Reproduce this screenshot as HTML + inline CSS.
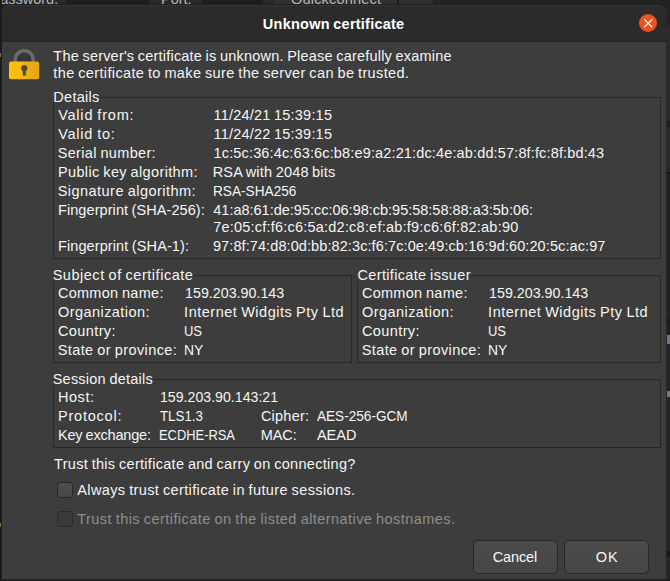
<!DOCTYPE html>
<html><head><meta charset="utf-8">
<style>
html,body{margin:0;padding:0;}
body{width:670px;height:581px;overflow:hidden;background:#232323;position:relative;font-family:"Liberation Sans",sans-serif;font-size:14.5px;line-height:17px;color:#f5f5f5;}
.abs{position:absolute;}
.bgt{position:absolute;white-space:nowrap;color:#b4b4b4;top:-9.5px;}
#dlg{left:2px;top:5px;width:664px;height:574px;background:#3d3d3d;border-radius:7px 7px 0 0;overflow:hidden;}
#tb{left:0;top:0;width:664px;height:36px;background:#2b2b2b;border-bottom:1px solid #262626;box-shadow:inset 0 1px 0 #373737;border-radius:7px 7px 0 0;}
#close{left:636.8px;top:8.6px;width:18.5px;height:18.5px;border-radius:50%;background:#e95420;}
.t{position:absolute;white-space:nowrap;transform-origin:0 0;word-spacing:-0.7px;}
.ln{position:absolute;background:#282828;}
.ti{font-weight:bold;color:#fff;}
.cb{position:absolute;width:16px;height:16px;box-sizing:border-box;border:1px solid #282828;border-radius:3px;background:linear-gradient(#4d4d4d,#474747);}
.btn{position:absolute;box-sizing:border-box;border:1px solid #282828;border-radius:5px;background:linear-gradient(#4b4b4b,#464646);}
.dim{color:#8e8e8e;}
</style></head><body>
<!-- background window fragments (top strip) -->
<div class="abs" style="left:0;top:0;width:66px;height:5px;background:#2a2a2a"></div>
<div class="abs" style="left:66px;top:0;width:83px;height:5px;background:#1d1d1d"></div>
<div class="abs" style="left:149px;top:0;width:53px;height:5px;background:#2a2a2a"></div>
<div class="abs" style="left:202px;top:0;width:61px;height:5px;background:#1d1d1d"></div>
<div class="abs" style="left:263px;top:0;width:11px;height:5px;background:#2a2a2a"></div>
<div class="abs" style="left:274px;top:0;width:123px;height:5px;background:#303030"></div>
<div class="abs" style="left:397px;top:0;width:2px;height:5px;background:#1c1c1c"></div>
<div class="abs" style="left:399px;top:0;width:34px;height:5px;background:#303030"></div>
<div class="abs" style="left:433px;top:0;width:1px;height:5px;background:#1c1c1c"></div>
<span class="bgt" style="left:-9.5px">Password:</span>
<span class="bgt" style="left:161px">Port:</span>
<span class="bgt" style="left:291px;letter-spacing:.2px">Quickconnect</span>
<!-- side / bottom strips -->
<div class="abs" style="left:0;top:0;width:2px;height:581px;background:#1c1c1c"></div>
<div class="abs" style="left:0;top:53px;width:1px;height:4px;background:#8f6a3a"></div>
<div class="abs" style="left:0;top:523px;width:1px;height:4px;background:#8f6a3a"></div>
<div class="abs" style="left:666px;top:0;width:4px;height:25px;background:#232323"></div>
<div class="abs" style="left:666px;top:25px;width:4px;height:556px;background:#2a2a2a"></div>
<div class="abs" style="left:666px;top:121px;width:4px;height:6px;background:#1e1e1e"></div>
<div class="abs" style="left:666px;top:172px;width:4px;height:2px;background:#141414"></div>
<div class="abs" style="left:666px;top:174px;width:4px;height:407px;background:#262626"></div>
<div class="abs" style="left:668px;top:174px;width:2px;height:160px;background:#1f1f1f"></div>
<div class="abs" style="left:666px;top:318px;width:4px;height:7px;background:#1d1d1d"></div>
<div class="abs" style="left:667px;top:335px;width:3px;height:9px;background:#6f7a86"></div>
<div class="abs" style="left:667px;top:391px;width:3px;height:6px;background:#777"></div>
<div class="abs" style="left:666px;top:551px;width:4px;height:6px;background:#1b1b1b"></div>
<div class="abs" style="left:0;top:579px;width:670px;height:2px;background:#202020"></div>
<div class="abs" style="left:2px;top:4px;width:664px;height:4px;background:#1f1f1f;border-radius:7px 7px 0 0"></div>
<div class="abs" id="dlg">
 <div class="abs" id="tb"></div>
 <div class="abs" id="close"><svg width="18.5" height="18.5" viewBox="0 0 18.5 18.5"><path d="M5.35 5.35 L13.15 13.15 M13.15 5.35 L5.35 13.15" stroke="#fff" stroke-width="1.3" fill="none"/></svg></div>
</div>
<!-- lock icon -->
<svg class="abs" style="left:6px;top:46px" width="36" height="36" viewBox="0 0 36 36">
 <defs><linearGradient id="lg1" x1="0" y1="0" x2="1" y2="0"><stop offset="0" stop-color="#fdc10e"/><stop offset=".45" stop-color="#f9b90f"/><stop offset=".55" stop-color="#eeb011"/><stop offset="1" stop-color="#e2a818"/></linearGradient></defs>
 <path d="M9.3 17 V13.6 A8.9 8.9 0 0 1 27.1 13.6 V17" stroke="#6b6b6b" stroke-width="3.5" fill="#373737"/>
 <rect x="3" y="15.5" width="30.2" height="17.8" rx="2" fill="url(#lg1)"/>
 <circle cx="18.3" cy="22.2" r="3.1" fill="#4a4a4c"/>
 <rect x="16.8" y="23" width="3" height="6.6" fill="#4a4a4c"/>
</svg>
<div class="ln" style="left:100px;top:97px;width:561px;height:1px"></div>
<div class="ln" style="left:53px;top:102px;width:1px;height:157px"></div>
<div class="ln" style="left:660px;top:97px;width:1px;height:162px"></div>
<div class="ln" style="left:53px;top:258px;width:608px;height:1px"></div>
<div class="ln" style="left:193px;top:275px;width:159px;height:1px"></div>
<div class="ln" style="left:53px;top:281px;width:1px;height:82px"></div>
<div class="ln" style="left:351px;top:275px;width:1px;height:88px"></div>
<div class="ln" style="left:53px;top:362px;width:299px;height:1px"></div>
<div class="ln" style="left:471px;top:275px;width:190px;height:1px"></div>
<div class="ln" style="left:357px;top:281px;width:1px;height:82px"></div>
<div class="ln" style="left:660px;top:275px;width:1px;height:88px"></div>
<div class="ln" style="left:357px;top:362px;width:304px;height:1px"></div>
<div class="ln" style="left:153px;top:379px;width:508px;height:1px"></div>
<div class="ln" style="left:53px;top:385px;width:1px;height:63px"></div>
<div class="ln" style="left:660px;top:379px;width:1px;height:69px"></div>
<div class="ln" style="left:53px;top:447px;width:608px;height:1px"></div>
<div class="cb" style="left:57px;top:482px"></div>
<div class="cb" style="left:57px;top:511px;background:#3a3a3a;border-color:#2a2a2a"></div>
<div class="btn" style="left:473px;top:540px;width:85px;height:34px"></div>
<div class="btn" style="left:564px;top:540px;width:85px;height:34px"></div>
<span class="t" id="l1" style="left:53.33px;top:48px;letter-spacing:0.198px">The server's certificate is unknown. Please carefully examine</span>
<span class="t" id="l2" style="left:53.33px;top:65px;letter-spacing:0.358px">the certificate to make sure the server can be trusted.</span>
<span class="t lg" id="gd" style="left:53.32px;top:89px;letter-spacing:0.269px">Details</span>
<span class="t" id="d1" style="left:58.13px;top:107px;letter-spacing:0.789px">Valid from:</span>
<span class="t" id="d2" style="left:58.13px;top:126px;letter-spacing:0.756px">Valid to:</span>
<span class="t" id="d3" style="left:57.71px;top:145px;letter-spacing:0.333px">Serial number:</span>
<span class="t" id="d4" style="left:58.01px;top:164px;letter-spacing:0.355px">Public key algorithm:</span>
<span class="t" id="d5" style="left:57.73px;top:183px;letter-spacing:0.460px">Signature algorithm:</span>
<span class="t" id="d6" style="left:58.01px;top:202px;letter-spacing:0.076px">Fingerprint (SHA-256):</span>
<span class="t" id="d7" style="left:57.97px;top:238px;letter-spacing:0.104px">Fingerprint (SHA-1):</span>
<span class="t" id="v1" style="left:213.57px;top:107px;letter-spacing:0.203px">11/24/21 15:39:15</span>
<span class="t" id="v2" style="left:213.57px;top:126px;letter-spacing:0.203px">11/24/22 15:39:15</span>
<span class="t" id="v3" style="left:213.59px;top:145px;letter-spacing:0.145px">1c:5c:36:4c:63:6c:b8:e9:a2:21:dc:4e:ab:dd:57:8f:fc:8f:bd:43</span>
<span class="t" id="v4" style="left:212.72px;top:164px;letter-spacing:0.168px">RSA with 2048 bits</span>
<span class="t" id="v5" style="left:212.83px;top:183px;transform:scaleX(0.9407)">RSA-SHA256</span>
<span class="t" id="v6" style="left:213.29px;top:202px;letter-spacing:-0.006px">41:a8:61:de:95:cc:06:98:cb:95:58:58:88:a3:5b:06:</span>
<span class="t" id="v7" style="left:213.13px;top:219px;letter-spacing:0.219px">7e:05:cf:f6:c6:5a:d2:c8:ef:ab:f9:c6:6f:82:ab:90</span>
<span class="t" id="v8" style="left:212.96px;top:238px;letter-spacing:0.094px">97:8f:74:d8:0d:bb:82:3c:f6:7c:0e:49:cb:16:9d:60:20:5c:ac:97</span>
<span class="t lg" id="gs" style="left:52.63px;top:267px;letter-spacing:0.528px">Subject of certificate</span>
<span class="t" id="s1" style="left:57.88px;top:285px;letter-spacing:0.284px">Common name:</span>
<span class="t" id="s2" style="left:57.92px;top:304px;letter-spacing:0.452px">Organization:</span>
<span class="t" id="s3" style="left:57.88px;top:323px;letter-spacing:0.412px">Country:</span>
<span class="t" id="s4" style="left:57.7px;top:342px;letter-spacing:0.408px">State or province:</span>
<span class="t" id="sv1" style="left:184.69px;top:285px;transform:scaleX(0.9847)">159.203.90.143</span>
<span class="t" id="sv2" style="left:184.11px;top:304px;letter-spacing:0.507px">Internet Widgits Pty Ltd</span>
<span class="t" id="sv3" style="left:184.28px;top:323px;transform:scaleX(0.8948)">US</span>
<span class="t" id="sv4" style="left:184.29px;top:342px;transform:scaleX(0.9559)">NY</span>
<span class="t lg" id="gi" style="left:357.53px;top:267px;letter-spacing:0.334px">Certificate issuer</span>
<span class="t" id="i1" style="left:361.88px;top:285px;letter-spacing:0.284px">Common name:</span>
<span class="t" id="i2" style="left:361.92px;top:304px;letter-spacing:0.452px">Organization:</span>
<span class="t" id="i3" style="left:361.88px;top:323px;letter-spacing:0.412px">Country:</span>
<span class="t" id="i4" style="left:361.7px;top:342px;letter-spacing:0.408px">State or province:</span>
<span class="t" id="iv1" style="left:488.69px;top:285px;transform:scaleX(0.9847)">159.203.90.143</span>
<span class="t" id="iv2" style="left:488.11px;top:304px;letter-spacing:0.507px">Internet Widgits Pty Ltd</span>
<span class="t" id="iv3" style="left:488.28px;top:323px;transform:scaleX(0.8948)">US</span>
<span class="t" id="iv4" style="left:488.29px;top:342px;transform:scaleX(0.9559)">NY</span>
<span class="t lg" id="ge" style="left:52.7px;top:371px;letter-spacing:0.233px">Session details</span>
<span class="t" id="e1" style="left:57.97px;top:389px;letter-spacing:0.543px">Host:</span>
<span class="t" id="e2" style="left:58.01px;top:408px;letter-spacing:0.775px">Protocol:</span>
<span class="t" id="e3" style="left:57.93px;top:427px;letter-spacing:-0.176px">Key exchange:</span>
<span class="t" id="ev1" style="left:159.69px;top:389px;transform:scaleX(0.9765)">159.203.90.143:21</span>
<span class="t" id="ev2" style="left:159.63px;top:408px;transform:scaleX(0.9172)">TLS1.3</span>
<span class="t" id="ev3" style="left:159.23px;top:427px;transform:scaleX(0.8894)">ECDHE-RSA</span>
<span class="t" id="ec1" style="left:260.89px;top:408px;letter-spacing:0.247px">Cipher:</span>
<span class="t" id="ec2" style="left:260.71px;top:427px;letter-spacing:-0.058px">MAC:</span>
<span class="t" id="ecv1" style="left:316.7px;top:408px;transform:scaleX(0.9370)">AES-256-GCM</span>
<span class="t" id="ecv2" style="left:316.96px;top:427px;letter-spacing:-0.015px">AEAD</span>
<span class="t" id="q" style="left:54.11px;top:456px;letter-spacing:0.291px">Trust this certificate and carry on connecting?</span>
<span class="t" id="c1" style="left:77.25px;top:482px;letter-spacing:0.376px">Always trust certificate in future sessions.</span>
<span class="t dim" id="c2" style="left:77.3px;top:511px;letter-spacing:0.436px">Trust this certificate on the listed alternative hostnames.</span>
<span class="t bt" id="b1" style="left:492.69px;top:549px;letter-spacing:-0.113px">Cancel</span>
<span class="t bt" id="b2" style="left:595.79px;top:549px;letter-spacing:0.960px">OK</span>
<span class="t ti" id="ti" style="left:262.86px;top:16px;letter-spacing:0.233px">Unknown certificate</span>
</body></html>
